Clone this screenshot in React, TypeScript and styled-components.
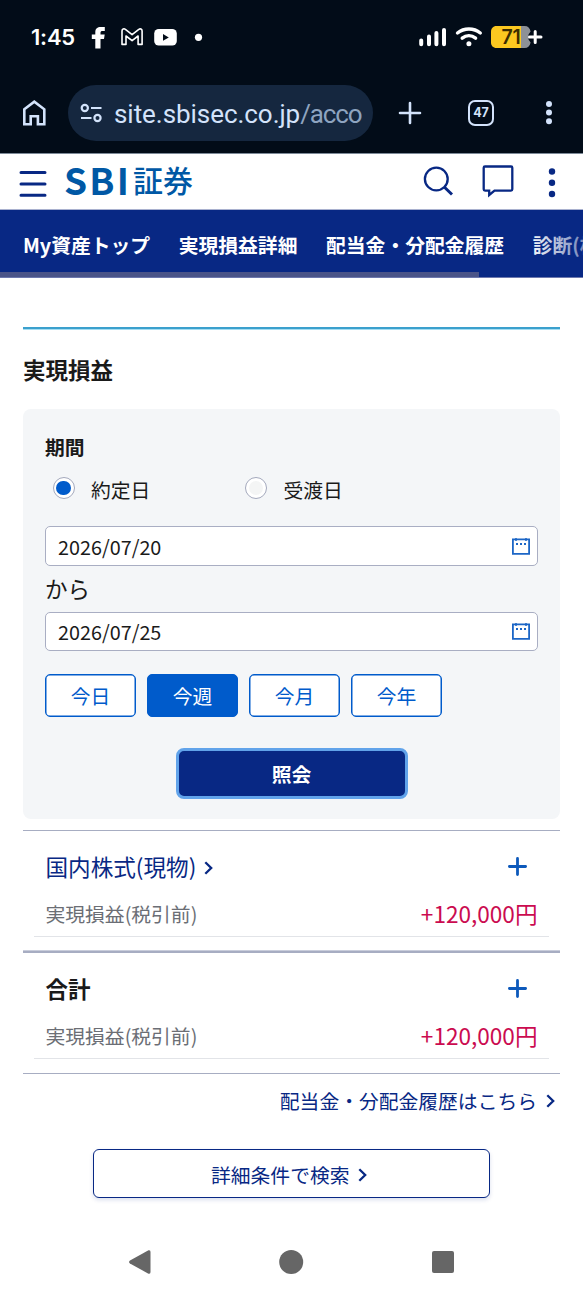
import React from "react";
import styled, { createGlobalStyle } from "styled-components";

const navy = "#082884";
const blue = "#005bcb";
const jp = `"Noto Sans CJK JP", "Noto Sans", sans-serif`;

const Global = createGlobalStyle`
  * { box-sizing: border-box; }
  body { margin: 0; background: #fff; font-family: ${jp}; color: #1a1a1a; }
  button { font-family: inherit; padding: 0; margin: 0; cursor: pointer; }
  a { text-decoration: none; }
  svg { display: block; flex: none; }
`;

const Screen = styled.div`
  width: 583px;
  height: 1296px;
  overflow: hidden;
  display: flex;
  flex-direction: column;
  background: #fff;
`;

const Chrome = styled.div`
  height: 154px;
  flex: none;
  background: #020c18;
  border-bottom: 1px solid #7d8a98;
`;

const StatusBar = styled.div`
  height: 74px;
  display: flex;
  align-items: center;
  justify-content: space-between;
  padding: 0 40px 0 31px;
`;

const Clock = styled.span`
  font: 600 22px/28px Inter, sans-serif;
  letter-spacing: -0.2px;
  width: 60px;
  color: #fff;
`;

const StatusGroup = styled.div<{ $gap?: number }>`
  display: flex;
  align-items: center;
  gap: ${(p) => p.$gap ?? 0}px;
`;

const Toolbar = styled.div`
  margin-top: 11px;
  height: 56px;
  display: flex;
  align-items: center;
  padding-left: 22px;
`;

const AddressPill = styled.div`
  margin-left: 21px;
  width: 305px;
  height: 56px;
  border-radius: 28px;
  background: #15273f;
  display: flex;
  align-items: center;
  padding-left: 12px;
  flex: none;
`;

const Url = styled.span`
  margin-left: 11px;
  width: 252px;
  overflow: hidden;
  white-space: nowrap;
  font: 400 26px/36px Roboto, sans-serif;
  padding-top: 1px;
  color: #d3e3fb;
  letter-spacing: -0.05px;
  em { font-style: normal; color: #8ea4c0; letter-spacing: -1.1px; }
`;

const ToolbarActions = styled.div`
  display: flex;
  align-items: center;
  margin-left: 25px;
`;

const TabCount = styled.div`
  width: 26px;
  height: 26px;
  margin: 0 51px 0 46px;
  border: 2.6px solid #d3e3fb;
  border-radius: 7px;
  color: #d3e3fb;
  font: 700 12.5px/22px Inter, sans-serif;
  text-align: center;
`;

const SiteHeader = styled.header`
  height: 56px;
  flex: none;
  border-bottom: 1px solid #a9b1cf;
  display: flex;
  align-items: center;
  padding-left: 19px;
`;

const Logo = styled.div`
  display: flex;
  align-items: center;
  margin-left: 17px;
  width: 134px;
  height: 54px;
  padding-bottom: 6px;
  color: #0058a5;
  line-height: 48px;
`;

const LogoLatin = styled.span`
  font-size: 37px;
  font-weight: 700;
  letter-spacing: 2.2px;
  width: 69px;
  white-space: nowrap;
`;

const LogoKanji = styled.span`
  font-size: 30px;
  font-weight: 500;
`;

const HeaderIcons = styled.div`
  margin-left: auto;
  padding-right: 26px;
  display: flex;
  align-items: center;
`;

const TabNav = styled.nav`
  position: relative;
  height: 68px;
  flex: none;
  overflow: hidden;
  background: ${navy};
  display: flex;
  flex-direction: column;
  border-bottom: 1px solid #6d78ad;
`;

const TabList = styled.div`
  height: 62px;
  display: flex;
  align-items: center;
  gap: 28.6px;
  padding: 8px 0 0 23px;
`;

const TabLink = styled.a`
  flex: none;
  color: #fff;
  font-size: 19.8px;
  font-weight: 700;
  line-height: 30px;
  white-space: nowrap;
`;

const ScrollTrack = styled.div`
  width: 479px;
  height: 5px;
  background: #4a5488;
`;

const EdgeFade = styled.div`
  position: absolute;
  right: 0;
  top: 0;
  width: 56px;
  height: 100%;
  background: linear-gradient(90deg, rgba(8, 40, 132, 0), rgba(8, 40, 132, 0.55));
`;

const Main = styled.main`
  padding: 49px 23px 0;
  display: flex;
  flex-direction: column;
`;

const Accent = styled.div`
  height: 2px;
  background: #3ba0cd;
  box-shadow: 0 1px #a5def3;
`;

const PageTitle = styled.h1`
  margin: 23px 0 0;
  font-size: 22.5px;
  line-height: 34px;
  font-weight: 700;
`;

const FilterCard = styled.section`
  margin-top: 23px;
  height: 410px;
  border-radius: 8px;
  background: #f4f6f8;
  padding: 23px 22px 0;
  display: flex;
  flex-direction: column;
`;

const FieldTitle = styled.h2`
  margin: 0;
  font-size: 19.8px;
  line-height: 30px;
  font-weight: 700;
`;

const RadioRow = styled.div`
  display: flex;
  margin-top: 11px;
  padding-left: 7.5px;
  height: 32px;
`;

const RadioLabel = styled.label`
  width: 192.5px;
  display: flex;
  gap: 16.5px;
  font-size: 19.8px;
  line-height: 34px;
`;

const RadioMark = styled.span<{ $on?: boolean }>`
  width: 22px;
  height: 22px;
  margin-top: 4px;
  border-radius: 50%;
  border: 1px solid #a4a9bd;
  background: #fff;
  display: grid;
  place-items: center;
  &::after {
    content: "";
    width: 14.5px;
    height: 14.5px;
    border-radius: 50%;
    background: ${(p) => (p.$on ? blue : "#f4f5f5")};
  }
`;

const DateField = styled.div<{ $top: number; $h: number }>`
  margin-top: ${(p) => p.$top}px;
  height: ${(p) => p.$h}px;
  width: 493px;
  flex: none;
  border: 1px solid #a9aec3;
  border-radius: 5px;
  background: #fff;
  display: flex;
  align-items: center;
  justify-content: space-between;
  padding: 1px 7px 0 12px;
  font-size: 19.8px;
  line-height: 30px;
`;

const Between = styled.div`
  font-size: 22.5px;
  line-height: 34px;
  margin-top: 5px;
`;

const PresetRow = styled.div`
  display: flex;
  gap: 11px;
  margin-top: 23px;
`;

const Preset = styled.button<{ $on?: boolean }>`
  width: 91px;
  height: 43px;
  border: 1px solid ${blue};
  box-shadow: inset 0 0 0 0.5px ${blue};
  border-radius: 5px;
  background: ${(p) => (p.$on ? blue : "#fff")};
  color: ${(p) => (p.$on ? "#fff" : blue)};
  font-size: 19.8px;
  line-height: 40px;
`;

const Submit = styled.button`
  width: 232px;
  height: 51px;
  margin: 31px 0 0 130.5px;
  border: 3px solid #61a3ea;
  border-radius: 8px;
  background: ${navy};
  color: #fff;
  font-size: 19.8px;
  font-weight: 700;
  line-height: 44px;
`;

const Results = styled.div`
  margin-top: 11px;
`;

const Summary = styled.section<{ $h: number }>`
  height: ${(p) => p.$h}px;
  padding: 0 11px;
  display: flex;
  flex-direction: column;
`;

const Rule = styled.div<{ $thick?: boolean }>`
  height: ${(p) => (p.$thick ? 3 : 1)}px;
  background: #a7adc2;
  border-top: ${(p) => (p.$thick ? "1px solid #c9cddb" : "0")};
`;

const SummaryHead = styled.div`
  margin-top: 18px;
  padding: 0 22px 0 11.5px;
  display: flex;
  align-items: center;
  justify-content: space-between;
  height: 34px;
`;

const SummaryLink = styled.a`
  display: flex;
  align-items: center;
  gap: 8px;
  color: ${navy};
  font-size: 22.6px;
  line-height: 34px;
  padding-top: 1px;
`;

const ChevronDrop = styled.span`
  padding-top: 2px;
`;

const SummaryTitle = styled.strong`
  font-size: 22.5px;
  line-height: 34px;
`;

const SummaryBody = styled.div`
  margin-top: 12px;
  height: 42px;
  padding: 0 11.5px;
  border-bottom: 1px solid #e2e4e8;
  display: flex;
  justify-content: space-between;
`;

const Label = styled.span`
  color: #6b6e75;
  font-size: 19.8px;
  line-height: 38px;
`;

const Amount = styled.span`
  color: #cb0b50;
  font-size: 22.6px;
  line-height: 37px;
`;

const HistoryLink = styled.a`
  align-self: flex-end;
  display: flex;
  align-items: center;
  gap: 9px;
  margin: 12px 5px 0 0;
  color: ${navy};
  font-size: 19.8px;
  line-height: 30px;
`;

const DetailButton = styled.button`
  width: 397px;
  height: 49px;
  margin: 33px 0 0 70px;
  border: 1.5px solid ${navy};
  border-radius: 6px;
  background: #fff;
  box-shadow: 0 2px 4px rgba(8, 40, 132, 0.15);
  color: ${navy};
  display: flex;
  align-items: center;
  justify-content: center;
  gap: 8.5px;
  padding: 2px 5px 0 0;
  font-size: 19.8px;
  line-height: 40px;
`;

const SystemNav = styled.footer`
  margin-top: auto;
  height: 68px;
  flex: none;
  display: flex;
  align-items: center;
  padding-left: 128px;
`;

const Chevron = () => (
  <svg width="9" height="14" viewBox="0 0 9 14" fill="none" stroke={navy} strokeWidth="2.3">
    <path d="M1.3 1.2 7.2 7l-5.9 5.8" />
  </svg>
);

const CalendarIcon = () => (
  <svg width="18" height="20" viewBox="0 0 18 20" fill="none" stroke="#1c66c6">
    <path d="M.9 2.4h16.2v14.4H.9z" strokeWidth="1.8" />
    <path d="M4 1v3M14 1v3" strokeWidth="1.5" />
    <path d="M4 7h2M8 7h2M12 7h2" strokeWidth="2" />
  </svg>
);

const PlusIcon = () => (
  <svg width="19" height="19" viewBox="0 0 19 19" stroke="#0d59bb" strokeWidth="2.8" strokeLinecap="round">
    <path d="M1.4 9.5h16.2M9.5 1.4v16.2" />
  </svg>
);

const NotificationIcons = () => (
  <svg width="115" height="24" viewBox="0 0 115 24" fill="#fff">
    <path d="M4.3 23.5V14H.8V9.6h3.5V7.3C4.3 3.5 6.5 2 9.6 2h4.2v4.1h-2.3c-1.4 0-2 .5-2 1.7v1.8h4.2l-.7 4.4H9.5v9.5z" />
    <path
      d="M31 19.4V6c0-2 2-2.8 3.4-1.6l6.7 5.3 6.7-5.3c1.4-1.2 3.3-.4 3.3 1.6v13.4h-4V11l-6 4.6L35 11v8.4z"
      fill="none"
      stroke="#fff"
      strokeWidth="1.6"
      strokeLinejoin="round"
    />
    <rect x="63.2" y="4" width="22.6" height="16.6" rx="4.5" />
    <path d="M72 9v6.8l5.800-3.400z" fill="#020c18" />
    <circle cx="107.5" cy="12.3" r="3.6" />
  </svg>
);

const SignalIcons = () => (
  <svg width="66" height="24" viewBox="0 0 66 24" fill="none" stroke="#fff" strokeLinecap="round">
    <path d="M3.2 15.4v3.800M11 11.4v7.800M18.400 8v11.200M26 5v14.200" strokeWidth="4" />
    <path d="M39.500 8c6.500-5.300 16.300-5.300 22.800 0" strokeWidth="3.400" />
    <path d="M44.200 13.200c4-3.200 9.400-3.200 13.400 0" strokeWidth="3.400" />
    <circle cx="50.900" cy="18.700" r="2.500" fill="#fff" stroke="none" />
  </svg>
);

const BatteryIcon = () => (
  <svg width="53" height="24" viewBox="0 0 53 24">
    <path d="M6.500 1H31v22H6.500C3 23 1 20.500 1 17.500V6.500C1 3.500 3 1 6.500 1z" fill="#fcc820" />
    <path d="M31 1h3.500C38 1 40 3 40.600 6.500L38.500 9.500v5l2.100 3C40 21 38 23 34.500 23H31z" fill="#8d9197" />
    <text x="11.500" y="18.600" fontSize="19.500" fontWeight="600" fontFamily="Inter, sans-serif" fill="#3b2d00" letterSpacing="-0.200">71</text>
    <path d="M39.500 12h11.500M45.200 6.400v11.200" stroke="#fff" strokeWidth="3" strokeLinecap="round" />
  </svg>
);

const HomeIcon = () => (
  <svg width="25" height="28" viewBox="0 0 25 28" fill="none" stroke="#d3e3fb" strokeWidth="2.600">
    <path d="M2.300 10.300 12.300 2.600l10 7.700v14.900h-6.400v-8h-7.200v8H2.300z" />
  </svg>
);

const SiteSettingsIcon = () => (
  <svg width="23" height="20" viewBox="0 0 23 20" fill="none" stroke="#d3e3fb" strokeWidth="2.200">
    <circle cx="4.800" cy="5" r="3.100" />
    <path d="M11 5h10.500M1 15h10.500" />
    <circle cx="17.500" cy="15" r="3.100" />
  </svg>
);

const MenuDots = ({ color, gap, r }: { color: string; gap: number; r: number }) => (
  <svg width="8" height={gap * 2 + 8} viewBox={`0 0 8 ${gap * 2 + 8}`} fill={color}>
    {[0, 1, 2].map((i) => (
      <circle key={i} cx="4" cy={4 + gap * i} r={r} />
    ))}
  </svg>
);

export default function App() {
  return (
    <Screen>
      <Global />
      <Chrome>
        <StatusBar>
          <StatusGroup>
            <Clock>1:45</Clock>
            <NotificationIcons />
          </StatusGroup>
          <StatusGroup $gap={6.5}>
            <SignalIcons />
            <BatteryIcon />
          </StatusGroup>
        </StatusBar>
        <Toolbar>
          <HomeIcon />
          <AddressPill>
            <SiteSettingsIcon />
            <Url>
              site.sbisec.co.jp<em>/acco</em>
            </Url>
          </AddressPill>
          <ToolbarActions>
            <svg width="24" height="24" viewBox="0 0 24 24" stroke="#d3e3fb" strokeWidth="2.6" strokeLinecap="round">
              <path d="M2 12h20M12 2v20" />
            </svg>
            <TabCount>47</TabCount>
            <MenuDots color="#d3e3fb" gap={8.6} r={3} />
          </ToolbarActions>
        </Toolbar>
      </Chrome>

      <SiteHeader>
        <svg width="28" height="30" viewBox="0 0 28 30" stroke={navy} strokeWidth="3" strokeLinecap="round">
          <path d="M2 5.5h24M2 17h24M2 28.3h24" />
        </svg>
        <Logo>
          <LogoLatin>SBI</LogoLatin>
          <LogoKanji>証券</LogoKanji>
        </Logo>
        <HeaderIcons>
          <svg width="134" height="35" viewBox="0 0 134 35" fill="none" stroke={navy}>
            <circle cx="13.3" cy="15" r="11.4" strokeWidth="2.3" />
            <path d="M21.500 23.200 29 30.500" strokeWidth="3" />
            <path d="M62 2.500h26q1.300 0 1.300 1.300v21.500q0 1.300-1.300 1.300H71.500L66.200 31V26.600H62q-1.300 0-1.300-1.300V3.800Q60.700 2.500 62 2.500z" strokeWidth="2.300" />
            <g fill={navy} stroke="none">
              <circle cx="129" cy="7.500" r="3.200" />
              <circle cx="129" cy="18.700" r="3.200" />
              <circle cx="129" cy="30" r="3.200" />
            </g>
          </svg>
        </HeaderIcons>
      </SiteHeader>

      <TabNav>
        <TabList>
          <TabLink>My資産トップ</TabLink>
          <TabLink>実現損益詳細</TabLink>
          <TabLink>配当金・分配金履歴</TabLink>
          <TabLink>診断(株</TabLink>
        </TabList>
        <ScrollTrack />
        <EdgeFade />
      </TabNav>

      <Main>
        <Accent />
        <PageTitle>実現損益</PageTitle>
        <FilterCard>
          <FieldTitle>期間</FieldTitle>
          <RadioRow>
            <RadioLabel>
              <RadioMark $on />
              約定日
            </RadioLabel>
            <RadioLabel>
              <RadioMark />
              受渡日
            </RadioLabel>
          </RadioRow>
          <DateField $top={21} $h={40}>
            2026/07/20
            <CalendarIcon />
          </DateField>
          <Between>から</Between>
          <DateField $top={7} $h={39}>
            2026/07/25
            <CalendarIcon />
          </DateField>
          <PresetRow>
            <Preset>今日</Preset>
            <Preset $on>今週</Preset>
            <Preset>今月</Preset>
            <Preset>今年</Preset>
          </PresetRow>
          <Submit>照会</Submit>
        </FilterCard>

        <Results>
          <Rule />
          <Summary $h={119}>
            <SummaryHead>
              <SummaryLink>
                国内株式(現物)
                <ChevronDrop>
                  <Chevron />
                </ChevronDrop>
              </SummaryLink>
              <PlusIcon />
            </SummaryHead>
            <SummaryBody>
              <Label>実現損益(税引前)</Label>
              <Amount>+120,000円</Amount>
            </SummaryBody>
          </Summary>
          <Rule $thick />
          <Summary $h={120}>
            <SummaryHead>
              <SummaryTitle>合計</SummaryTitle>
              <PlusIcon />
            </SummaryHead>
            <SummaryBody>
              <Label>実現損益(税引前)</Label>
              <Amount>+120,000円</Amount>
            </SummaryBody>
          </Summary>
          <Rule />
        </Results>

        <HistoryLink>
          配当金・分配金履歴はこちら
          <Chevron />
        </HistoryLink>
        <DetailButton>
          詳細条件で検索
          <Chevron />
        </DetailButton>
      </Main>

      <SystemNav>
        <svg width="328" height="26" viewBox="0 0 328 26" fill="#666">
          <path d="M20.500 1.300 2 11.400q-1.900 1.600 0 3.200L20.500 24.700q2 .6 2-1.700V3q0-2.300-2-1.700z" />
          <circle cx="163.200" cy="13" r="12" />
          <rect x="304" y="2" width="22" height="22" rx="2" />
        </svg>
      </SystemNav>
    </Screen>
  );
}
